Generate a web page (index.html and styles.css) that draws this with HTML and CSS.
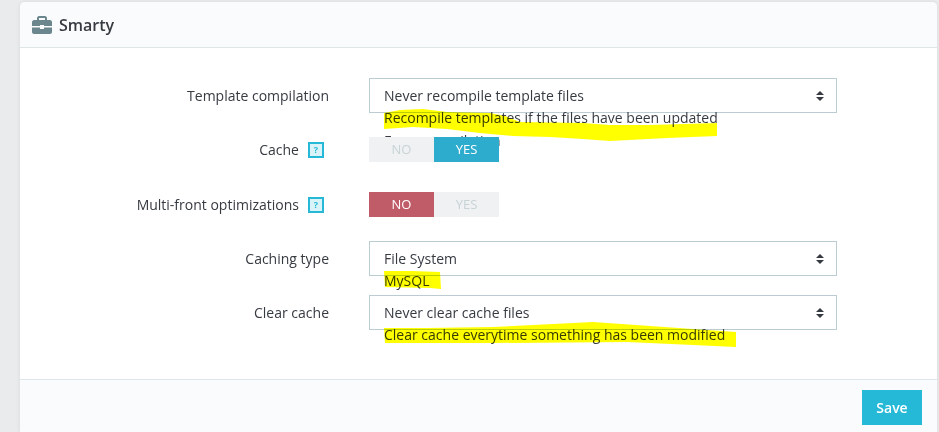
FILE: index.html
```html
<!DOCTYPE html>
<html lang="en">
<head>
    <meta charset="UTF-8">
    <title>Smarty</title>
    <link rel="stylesheet" href="styles.css">
</head>
<body>
    <div class="panel">
        <header class="panel-heading">
            <svg class="heading-icon" width="20" height="18" viewBox="0 0 20 18">
                <path fill="#6c868e" d="M7 0h6c1 0 2 1 2 2v2h3c1 0 2 1 2 2v4H12V9H8v1H0V6c0-1 1-2 2-2h3V2c0-1 1-2 2-2zm0 2v2h6V2H7zM0 11.500h8V13h4v-1.500h8V16c0 1-1 2-2 2H2c-1 0-2-1-2-2v-4.500z"/>
            </svg>
            <span>Smarty</span>
        </header>

        <div class="form-wrapper">
            <div class="form-row row-select-first">
                <label class="control-label">Template compilation</label>
                <div class="fake-select">
                    Never recompile template files
                    <span class="caret-pair"></span>
                    <div class="options">
                        <div>Recompile templates if the files have been updated</div>
                        <div class="option-hidden">Force compilation</div>
                    </div>
                </div>
            </div>

            <div class="form-row row-switch">
                <label class="control-label">Cache <span class="help-box">?</span></label>
                <div class="switch">
                    <span class="off">NO</span>
                    <span class="on-yes">YES</span>
                </div>
            </div>

            <div class="form-row row-switch row-multi">
                <label class="control-label">Multi-front optimizations <span class="help-box">?</span></label>
                <div class="switch">
                    <span class="on-no">NO</span>
                    <span class="off">YES</span>
                </div>
            </div>

            <div class="form-row row-caching">
                <label class="control-label">Caching type</label>
                <div class="fake-select">
                    File System
                    <span class="caret-pair"></span>
                    <div class="options">
                        <div>MySQL</div>
                    </div>
                </div>
            </div>

            <div class="form-row row-clear">
                <label class="control-label">Clear cache</label>
                <div class="fake-select">
                    Never clear cache files
                    <span class="caret-pair"></span>
                    <div class="options">
                        <div>Clear cache everytime something has been modified</div>
                    </div>
                </div>
            </div>
        </div>

        <footer class="panel-footer">
            <button class="save-btn">Save</button>
        </footer>
    </div>

    <!-- marker strokes drawn on top of the screenshot -->
    <svg class="marker" width="939" height="432" viewBox="0 0 939 432">
        <path fill="#ffff00" d="M384 113 L400 110 L423 109 L447 112 L490 113 L505 116 L520 122 L583 123 L610 125 L650 125 L717 123 L717 136 L667 138 L610 141 L583 139 L550 137 L513 136 L480 133 L447 129 L413 127 L384 129 Z"/>
        <path fill="#ffff00" d="M384 271 L412 271 L440 272 L441 289 L430 288 L385 287 Z"/>
        <path fill="#ffff00" d="M384 328 L427 328 L493 327 L593 322 L693 329 L736 332 L736 347 L693 345 L627 342 L493 343 L385 343 Z"/>
    </svg>
</body>
</html>
```
FILE: styles.css
```css
body {
    margin: 0;
    background-color: #e9ebec;
    font-family: "Open Sans", sans-serif;
    font-size: 14px;
    color: #363a41;
    height: 432px;
    overflow: hidden;
}
.panel {
    margin: 2px 2px 0 20px;
    background-color: #fff;
    border-radius: 5px 5px 0 0;
    box-shadow: 0 0 4px rgba(0, 0, 0, 0.08);
}
.panel-heading {
    display: flex;
    align-items: center;
    gap: 7px;
    height: 45px;
    padding-left: 12px;
    background-color: #fafbfc;
    border-bottom: 1px solid #dfe6e8;
    font-size: 16px;
    font-weight: 600;
    border-radius: 5px 5px 0 0;
}
.form-wrapper {
    padding-top: 30px;
    height: 331px;
    box-sizing: border-box;
}
.form-row {
    display: flex;
    align-items: center;
}
.control-label {
    display: flex;
    justify-content: flex-end;
    align-items: center;
    gap: 9px;
    width: 309px;
    margin-right: 40px;
    color: #363a41;
}
.help-box {
    box-sizing: border-box;
    width: 16px;
    height: 16px;
    border: 2px solid #25b9d7;
    background-color: #d9f3f8;
    color: #25b9d7;
    font-size: 9px;
    font-weight: 700;
    line-height: 12px;
    text-align: center;
}
.row-switch .control-label {
    width: 304px;
    margin-right: 45px;
}
.row-switch {
    margin-top: 24px;
}
.row-multi {
    margin-top: 30px;
}
.row-caching {
    margin-top: 24px;
}
.row-clear {
    margin-top: 19px;
}
.fake-select {
    position: relative;
    box-sizing: border-box;
    width: 468px;
    height: 35px;
    padding-left: 14px;
    border: 1px solid #bbcdd2;
    line-height: 33px;
    background-color: #fff;
}
.caret-pair::before,
.caret-pair::after {
    content: "";
    position: absolute;
    right: 12px;
    border-left: 4px solid transparent;
    border-right: 4px solid transparent;
}
.caret-pair::before {
    top: 12px;
    border-bottom: 4px solid #363a41;
}
.caret-pair::after {
    top: 18px;
    border-top: 4px solid #363a41;
}
.options {
    position: absolute;
    left: 14px;
    top: 29px;
    line-height: 19px;
    white-space: nowrap;
}
.option-hidden {
    margin-top: 4px;
}
.switch {
    position: relative;
    z-index: 1;
    display: flex;
    width: 130px;
    height: 25px;
    line-height: 25px;
    text-align: center;
    font-size: 13px;
}
.switch span {
    flex: 1;
}
.off {
    background-color: #eff1f2;
    color: #c8d3d6;
}
.on-yes {
    background-color: #2eacce;
    color: #fff;
}
.on-no {
    background-color: #c05c67;
    color: #fff;
}
.panel-footer {
    display: flex;
    justify-content: flex-end;
    box-sizing: border-box;
    height: 54px;
    padding: 10px 15px 0 0;
    background-color: #fafbfc;
    border-top: 1px solid #dfe6e8;
}
.save-btn {
    width: 60px;
    height: 35px;
    border: 0;
    background-color: #25b9d7;
    color: #fff;
    font-family: inherit;
    font-size: 14px;
    font-weight: 600;
}
.marker {
    position: absolute;
    left: 0;
    top: 0;
    z-index: 2;
    mix-blend-mode: multiply;
    pointer-events: none;
}
```
